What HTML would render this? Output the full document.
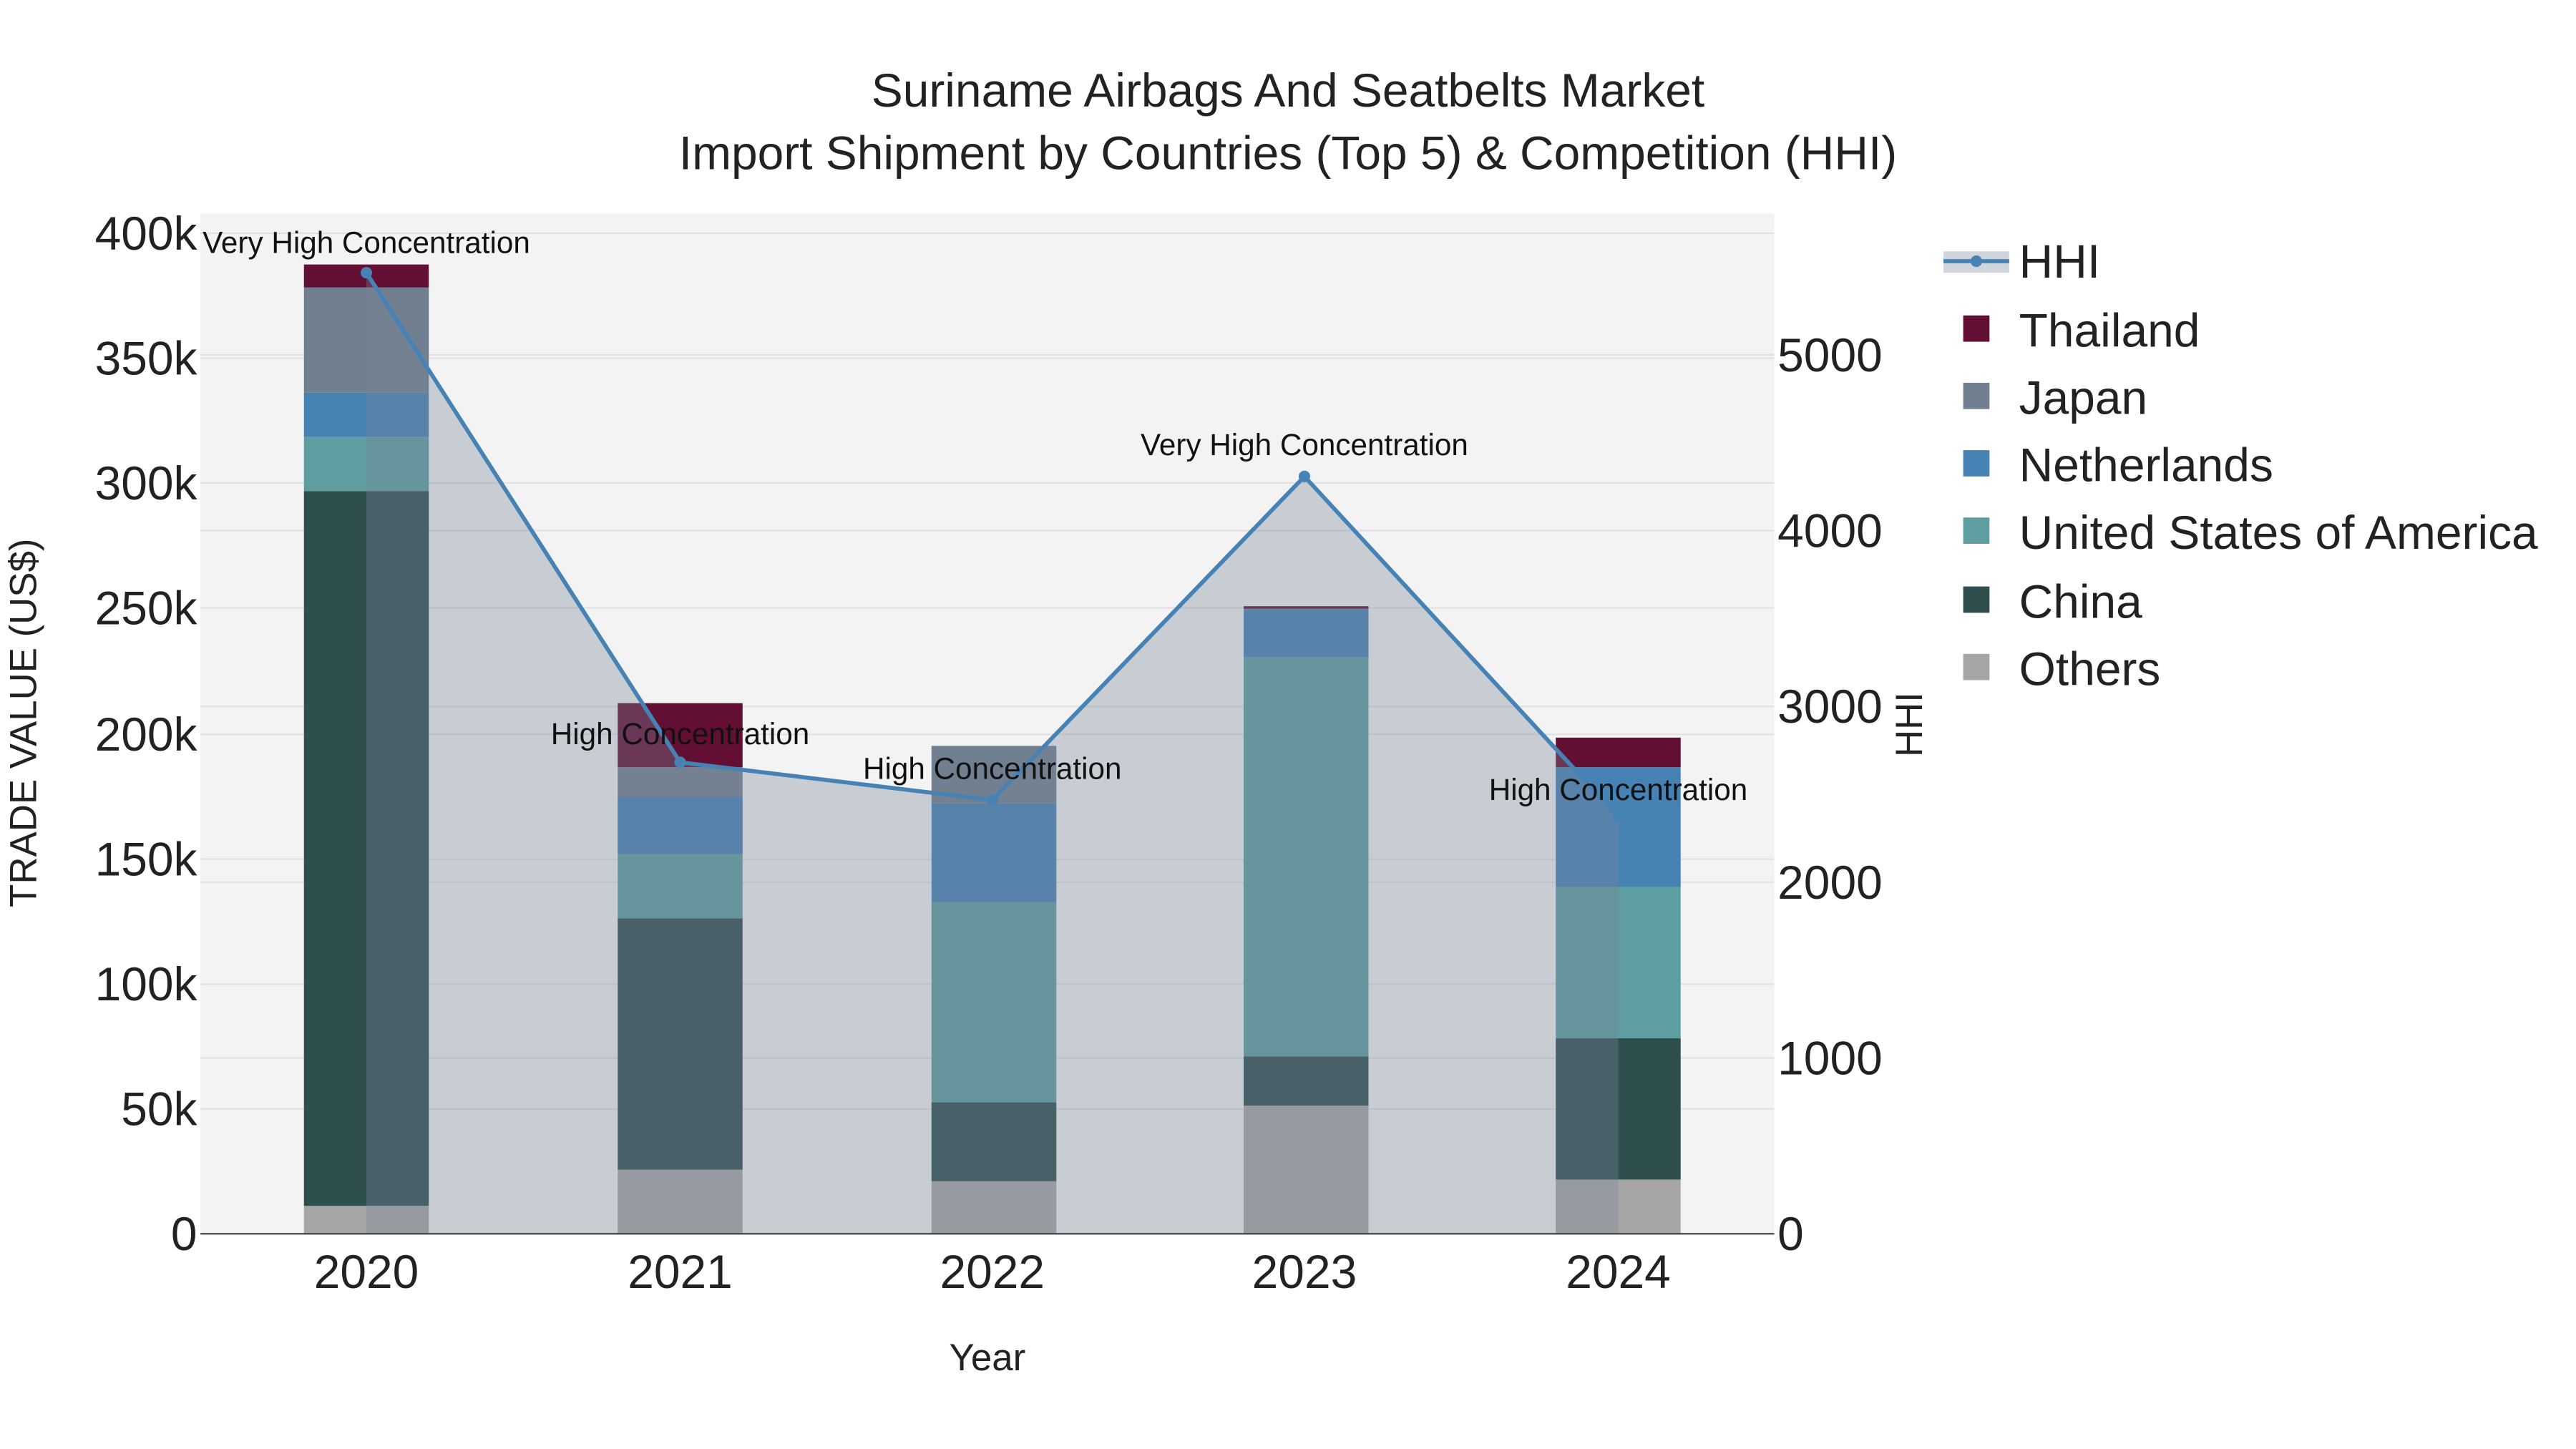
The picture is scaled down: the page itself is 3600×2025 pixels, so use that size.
<!DOCTYPE html>
<html><head><meta charset="utf-8"><style>html,body{margin:0;padding:0;background:#fff}svg{display:block}</style></head>
<body>
<svg width="3600" height="2025" viewBox="0 0 1568 882" xmlns="http://www.w3.org/2000/svg" font-family="Liberation Sans, sans-serif">
<rect width="1568" height="882" fill="#fff"/>
<rect x="122" y="130" width="958" height="621" fill="#f3f3f3"/>
<g stroke="#e2e2e2" stroke-width="1">
<line x1="122" x2="1080" y1="142" y2="142"/><line x1="122" x2="1080" y1="218" y2="218"/><line x1="122" x2="1080" y1="294" y2="294"/><line x1="122" x2="1080" y1="370" y2="370"/><line x1="122" x2="1080" y1="447" y2="447"/><line x1="122" x2="1080" y1="523" y2="523"/><line x1="122" x2="1080" y1="599" y2="599"/><line x1="122" x2="1080" y1="675" y2="675"/>
<line x1="122" x2="1080" y1="216" y2="216"/><line x1="122" x2="1080" y1="323" y2="323"/><line x1="122" x2="1080" y1="430" y2="430"/><line x1="122" x2="1080" y1="537" y2="537"/><line x1="122" x2="1080" y1="644" y2="644"/>
</g>
<g>
<rect x="185" y="734" width="76" height="17" fill="#a6a6a6"/><rect x="185" y="299" width="76" height="435" fill="#2f4f4f"/><rect x="185" y="266" width="76" height="33" fill="#5f9ea0"/><rect x="185" y="239" width="76" height="27" fill="#4682b4"/><rect x="185" y="175" width="76" height="64" fill="#708090"/><rect x="185" y="161" width="76" height="14" fill="#630f33"/>
<rect x="376" y="712" width="76" height="39" fill="#a6a6a6"/><rect x="376" y="559" width="76" height="153" fill="#2f4f4f"/><rect x="376" y="520" width="76" height="39" fill="#5f9ea0"/><rect x="376" y="485" width="76" height="35" fill="#4682b4"/><rect x="376" y="467" width="76" height="18" fill="#708090"/><rect x="376" y="428" width="76" height="39" fill="#630f33"/>
<rect x="567" y="719" width="76" height="32" fill="#a6a6a6"/><rect x="567" y="671" width="76" height="48" fill="#2f4f4f"/><rect x="567" y="549" width="76" height="122" fill="#5f9ea0"/><rect x="567" y="489" width="76" height="60" fill="#4682b4"/><rect x="567" y="454" width="76" height="35" fill="#708090"/>
<rect x="757" y="673" width="76" height="78" fill="#a6a6a6"/><rect x="757" y="643" width="76" height="30" fill="#2f4f4f"/><rect x="757" y="400" width="76" height="243" fill="#5f9ea0"/><rect x="757" y="371" width="76" height="29" fill="#4682b4"/><rect x="757" y="370" width="76" height="1" fill="#708090"/><rect x="757" y="369" width="76" height="1.5" fill="#630f33"/>
<rect x="947" y="718" width="76" height="33" fill="#a6a6a6"/><rect x="947" y="632" width="76" height="86" fill="#2f4f4f"/><rect x="947" y="540" width="76" height="92" fill="#5f9ea0"/><rect x="947" y="467" width="76" height="73" fill="#4682b4"/><rect x="947" y="449" width="76" height="18" fill="#630f33"/>
</g>
<polygon points="223,166 414,464 604,487 794,290 985,497 985,751 223,751" fill="rgb(119,131,151)" fill-opacity="0.35"/>
<polyline points="223,166 414,464 604,487 794,290 985,497" fill="none" stroke="#4682b4" stroke-width="2.5"/>
<g fill="#4682b4"><circle cx="223" cy="166" r="3.5"/><circle cx="414" cy="464" r="3.5"/><circle cx="604" cy="487" r="3.5"/><circle cx="794" cy="290" r="3.5"/><circle cx="985" cy="497" r="3.5"/></g>
<line x1="122" x2="1080" y1="751" y2="751" stroke="#444" stroke-width="1"/>
<g font-size="18.4" fill="#111" text-anchor="middle">
<text x="223" y="154">Very High Concentration</text>
<text x="414" y="453">High Concentration</text>
<text x="604" y="474">High Concentration</text>
<text x="794" y="277">Very High Concentration</text>
<text x="985" y="487">High Concentration</text>
</g>
<g font-size="28.7" fill="#222" text-anchor="end">
<text x="120" y="152">400k</text><text x="120" y="228">350k</text><text x="120" y="304">300k</text><text x="120" y="380">250k</text><text x="120" y="457">200k</text><text x="120" y="533">150k</text><text x="120" y="609">100k</text><text x="120" y="685">50k</text><text x="120" y="761">0</text>
</g>
<g font-size="28.7" fill="#222" text-anchor="start">
<text x="1082" y="226">5000</text><text x="1082" y="333">4000</text><text x="1082" y="440">3000</text><text x="1082" y="547">2000</text><text x="1082" y="654">1000</text><text x="1082" y="761">0</text>
</g>
<g font-size="28.7" fill="#222" text-anchor="middle">
<text x="223" y="784">2020</text><text x="414" y="784">2021</text><text x="604" y="784">2022</text><text x="794" y="784">2023</text><text x="985" y="784">2024</text>
</g>
<text x="601" y="834" font-size="23" fill="#222" text-anchor="middle">Year</text>
<text transform="translate(22,440) rotate(-90)" font-size="23" fill="#222" text-anchor="middle">TRADE VALUE (US$)</text>
<text transform="translate(1170,441) rotate(-90)" font-size="23" fill="#222" text-anchor="middle">HHI</text>
<g font-size="28.7" fill="#222" text-anchor="middle">
<text x="784" y="65">Suriname Airbags And Seatbelts Market</text>
<text x="784" y="103">Import Shipment by Countries (Top 5) &amp; Competition (HHI)</text>
</g>
<g font-size="28.7" fill="#222">
<rect x="1183" y="153" width="40" height="13" fill="rgb(119,131,151)" fill-opacity="0.35"/>
<line x1="1183" x2="1223" y1="159" y2="159" stroke="#4682b4" stroke-width="2.5"/><circle cx="1203" cy="159" r="3.5" fill="#4682b4"/>
<text x="1229" y="169">HHI</text>
<rect x="1195" y="192" width="16" height="16" fill="#630f33"/><text x="1229" y="211">Thailand</text>
<rect x="1195" y="233" width="16" height="16" fill="#708090"/><text x="1229" y="252">Japan</text>
<rect x="1195" y="274" width="16" height="16" fill="#4682b4"/><text x="1229" y="293">Netherlands</text>
<rect x="1195" y="315" width="16" height="16" fill="#5f9ea0"/><text x="1229" y="334">United States of America</text>
<rect x="1195" y="357" width="16" height="16" fill="#2f4f4f"/><text x="1229" y="376">China</text>
<rect x="1195" y="398" width="16" height="16" fill="#a6a6a6"/><text x="1229" y="417">Others</text>
</g>
</svg>
</body></html>
